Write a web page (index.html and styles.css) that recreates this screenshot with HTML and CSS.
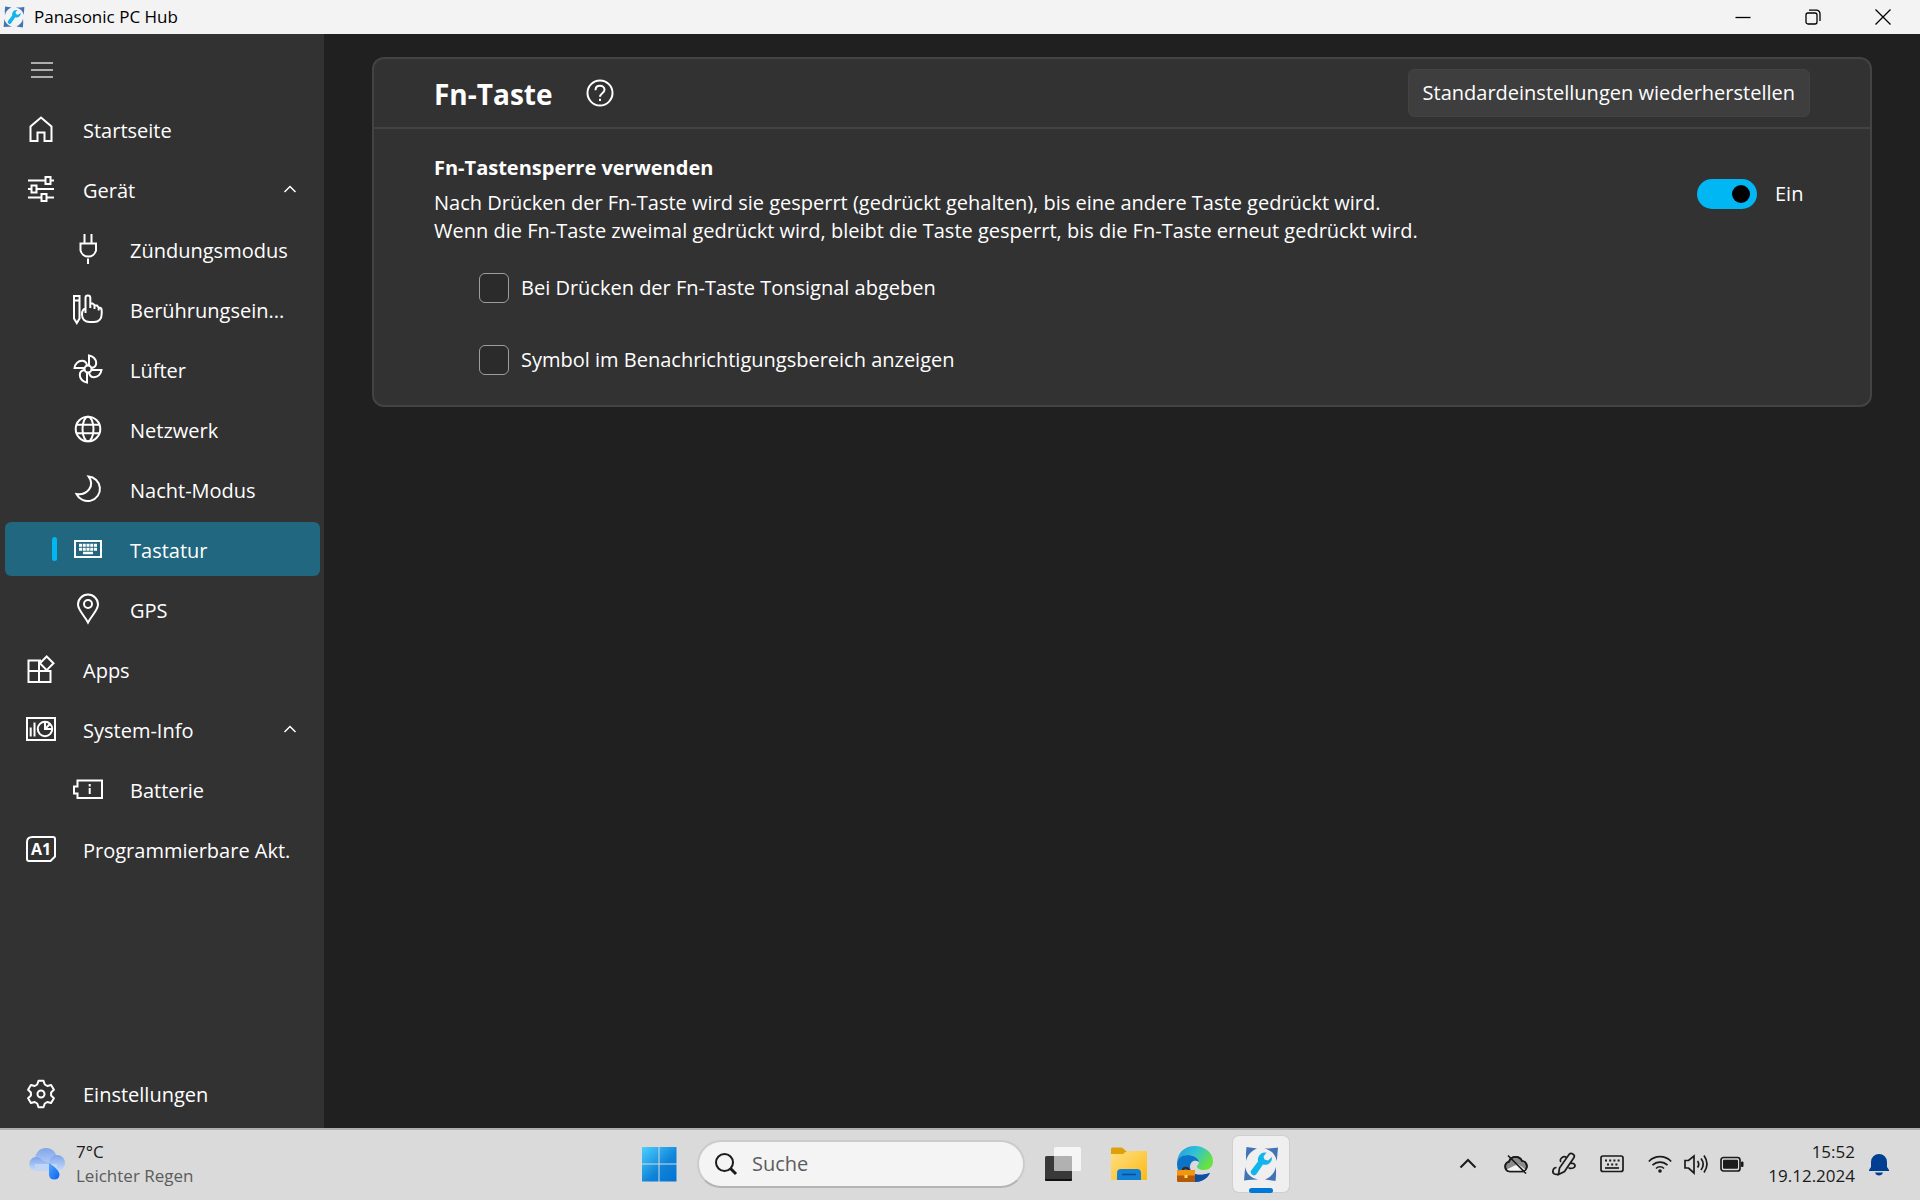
FILE: index.html
```html
<!DOCTYPE html>
<html lang="de">
<head>
    <meta charset="UTF-8">
    <meta name="viewport" content="width=device-width, initial-scale=1.0">
    <title>Panasonic PC Hub</title>
    <link rel="stylesheet" href="styles.css">
</head>
<body>
    <!-- shared symbols -->
    <svg class="symbols" width="0" height="0" aria-hidden="true">
        <symbol id="hubLogo" viewBox="0 0 36 36">
            <g fill="#4173b6">
                <path d="M3.5 1L14 2.5C8 5 4.500 9 3.200 15Q2.500 8 3.500 1z"/>
                <path d="M21 2.500Q28 2.500 35 1.500L33.800 15C32.500 8 28 4 21 2.500z"/>
                <path d="M3.500 1L14 2.500C8 5 4.500 9 3.200 15Q2.500 8 3.500 1z" transform="rotate(180 18 18)"/>
                <path d="M21 2.500Q28 2.500 35 1.500L33.800 15C32.500 8 28 4 21 2.500z" transform="rotate(180 18 18)"/>
            </g>
            <path fill="#12b4ec" d="M23.500 6.500l-3 4 1 3 3.500 1 4-3.500A7 7 0 0 1 20 18.500L13.500 28a3.200 3.200 0 0 1-5-4L15 15.500A7.500 7.500 0 0 1 23.500 6.500z"/>
        </symbol>
        <symbol id="chevronUp" viewBox="0 0 16 16">
            <path d="M2.5 11L8 5.500l5.500 5.500" fill="none" stroke="currentColor" stroke-width="1.5"/>
        </symbol>
    </svg>

    <header class="titlebar">
        <svg class="titlebar-logo"><use href="#hubLogo"/></svg>
        <span class="titlebar-name">Panasonic PC Hub</span>
        <div class="window-buttons">
            <button class="window-button" aria-label="Minimieren">
                <svg viewBox="0 0 16 16"><path d="M.5 8.500h15"/></svg>
            </button>
            <button class="window-button" aria-label="Verkleinern">
                <svg viewBox="0 0 16 16"><rect x="1" y="4" width="11" height="11" rx="2"/><path d="M4 1.200h7.500a3.500 3.500 0 0 1 3.500 3.500V12"/></svg>
            </button>
            <button class="window-button" aria-label="Schließen">
                <svg viewBox="0 0 16 16"><path d="M.5.5l15 15M15.500.5l-15 15"/></svg>
            </button>
        </div>
    </header>

    <div class="window">
        <nav class="sidebar">
            <button class="nav-item" aria-label="Navigation">
                <svg class="icon menu-icon" viewBox="0 0 30 30"><path d="M5 8h22M5 15h22M5 22h22"/></svg>
            </button>
            <a class="nav-item" href="#start">
                <svg class="icon" viewBox="0 0 30 30"><path d="M4.500 26V11.500L15 2.500l10.500 9V26h-7v-8.500h-7V26z"/></svg>
                <span>Startseite</span>
            </a>
            <a class="nav-item" href="#geraet">
                <svg class="icon" viewBox="0 0 30 30"><path d="M2 5.500h17M25 5.500h3M2 14h3M11 14h17M2 22.500h13M21 22.500h7"/><path d="M19.500 2h5v7h-5zM5.500 10.500h5v7h-5zM15.500 19h5v7h-5z"/></svg>
                <span>Gerät</span>
                <svg class="chevron"><use href="#chevronUp"/></svg>
            </a>
            <a class="nav-item sub" href="#zuendung">
                <svg class="icon" viewBox="0 0 30 30"><path d="M11.500-1v9M18.500-1v9M7.500 8.500h15.500v7a8 8 0 0 1-15.500 0zM15 23.500V29"/></svg>
                <span>Zündungsmodus</span>
            </a>
            <a class="nav-item sub" href="#touch">
                <svg class="icon" viewBox="0 0 30 30"><path d="M1 1h5.500v22.500l-2.700 4.500L1 23.500zM1 5.500h5.500"/><path d="M12.500 18V2.800a2.400 2.400 0 0 1 4.800 0V13M17.300 8.500h2.200l2 1.500v4M21.500 10.500h2.500l1.700 2v3M25.700 12.500c2.300 0 3 1.200 3 3.200v3c0 5-3 8.300-7.700 8.300h-4.500C12 27 9 24 9 19.500c0-3 1-5.500 3.500-6"/></svg>
                <span>Berührungsein...</span>
            </a>
            <a class="nav-item sub" href="#luefter">
                <svg class="icon" viewBox="0 0 30 30">
                    <circle cx="15" cy="14" r="3.500"/>
                    <path d="M16 10V.5c4 .5 7.200 3.500 7.200 7.500 0 2.500-2 4.500-4.500 5"/>
                    <path d="M16 10V.5c4 .5 7.200 3.500 7.200 7.500 0 2.500-2 4.500-4.500 5" transform="rotate(90 15 14)"/>
                    <path d="M16 10V.5c4 .5 7.200 3.500 7.200 7.500 0 2.500-2 4.500-4.500 5" transform="rotate(180 15 14)"/>
                    <path d="M16 10V.5c4 .5 7.200 3.500 7.200 7.500 0 2.500-2 4.500-4.500 5" transform="rotate(270 15 14)"/>
                </svg>
                <span>Lüfter</span>
            </a>
            <a class="nav-item sub" href="#netzwerk">
                <svg class="icon" viewBox="0 0 30 30"><circle cx="15" cy="14" r="12.300"/><ellipse cx="15" cy="14" rx="5.500" ry="12.300"/><path d="M3.500 9.700h23M3.500 18.300h23"/></svg>
                <span>Netzwerk</span>
            </a>
            <a class="nav-item sub" href="#nacht">
                <svg class="icon" viewBox="0 0 30 30"><path d="M15.500 1.500a12.300 12.300 0 1 1-12 17.500C14 20.500 22.500 11 15.500 1.500z"/></svg>
                <span>Nacht-Modus</span>
            </a>
            <a class="nav-item sub active" href="#tastatur" aria-current="page">
                <svg class="icon" viewBox="0 0 30 30"><path d="M2 6h26v16H2z"/><path d="M6 10.200h18M6 14.200h18" stroke-width="3" stroke-dasharray="3 .75"/><path d="M10 18h10" stroke-width="2.500"/></svg>
                <span>Tastatur</span>
            </a>
            <a class="nav-item sub" href="#gps">
                <svg class="icon" viewBox="0 0 30 30"><path d="M15 27.500C11 20 5 15 5 9.500a10 10 0 0 1 20 0C25 15 19 20 15 27.500z"/><circle cx="15" cy="9" r="4"/></svg>
                <span>GPS</span>
            </a>
            <a class="nav-item" href="#apps">
                <svg class="icon" viewBox="0 0 30 30"><path d="M15 5.500H2.500V27h22V16H2.500M13 5.500V27M24.500 16v-1"/><path class="knockout" d="M20.700 1.500l6.800 6.800-6.800 6.800-6.800-6.800z"/></svg>
                <span>Apps</span>
            </a>
            <a class="nav-item" href="#system">
                <svg class="icon" viewBox="0 0 30 30"><path d="M1 3h28v22H1zM4.700 12.500v9M8.500 7.500v14"/><circle cx="19" cy="14" r="7.200"/><path d="M19 7v7h7M19 14l5-5"/></svg>
                <span>System-Info</span>
                <svg class="chevron"><use href="#chevronUp"/></svg>
            </a>
            <a class="nav-item sub" href="#batterie">
                <svg class="icon" viewBox="0 0 30 30"><path d="M4.500 5.500H29v17.500H4.500v-4.500H1v-7h3.500z"/><path d="M16.700 9v2.500M16.700 13v6"/></svg>
                <span>Batterie</span>
            </a>
            <a class="nav-item" href="#tasten">
                <svg class="icon" viewBox="0 0 30 30"><path d="M6.500 2H27a2 2 0 0 1 2 2v17.500l-4.500 4.500H3a2 2 0 0 1-2-2V7q0-5 5.500-5z"/><text class="icon-text" x="15" y="20" text-anchor="middle">A1</text></svg>
                <span>Programmierbare Akt.</span>
            </a>
            <a class="nav-item nav-bottom" href="#einstellungen">
                <svg class="icon" viewBox="-15 -15 30 30"><path stroke-linejoin="round" d="M-3.800-9.500L-2.500-13.200h5L3.800-9.500 6.300-8l3.800-1 2.800 4.800L10.100-1.500v3l2.800 2.700L10.100 9 6.300 8 3.800 9.500 2.500 13.200h-5L-3.800 9.500-6.300 8l-3.800 1-2.800-4.800 2.800-2.700v-3l-2.800-2.700L-10.100-9l3.800 1z"/><circle r="3.500"/></svg>
                <span>Einstellungen</span>
            </a>
        </nav>

        <main class="content">
            <section class="card">
                <div class="card-header">
                    <h1>Fn-Taste</h1>
                    <button class="help-button" aria-label="Hilfe">
                        <svg viewBox="0 0 28 28"><circle cx="14" cy="14" r="12.500"/><path d="M9.500 11.200c0-2.700 1.900-4.400 4.500-4.400s4.500 1.700 4.500 4c0 3.200-4.500 3.600-4.500 7"/><path d="M14 19.700v2.300"/></svg>
                    </button>
                    <button class="reset-button">Standardeinstellungen wiederherstellen</button>
                </div>
                <div class="card-body">
                    <div class="setting">
                        <div class="setting-text">
                            <h2 id="lockTitle">Fn-Tastensperre verwenden</h2>
                            <p>Nach Drücken der Fn-Taste wird sie gesperrt (gedrückt gehalten), bis eine andere Taste gedrückt wird.<br>
                            Wenn die Fn-Taste zweimal gedrückt wird, bleibt die Taste gesperrt, bis die Fn-Taste erneut gedrückt wird.</p>
                        </div>
                        <label class="toggle">
                            <input type="checkbox" role="switch" aria-describedby="lockTitle" checked>
                            <span>Ein</span>
                        </label>
                    </div>
                    <div class="options">
                        <label class="option"><input type="checkbox"><span>Bei Drücken der Fn-Taste Tonsignal abgeben</span></label>
                        <label class="option"><input type="checkbox"><span>Symbol im Benachrichtigungsbereich anzeigen</span></label>
                    </div>
                </div>
            </section>
        </main>
    </div>

    <footer class="taskbar">
        <button class="weather">
            <svg viewBox="0 0 36 32">
                <defs>
                    <linearGradient id="cloud" x1="0" y1="0" x2="0" y2="1">
                        <stop offset="0" stop-color="#7fa4ea"/>
                        <stop offset="1" stop-color="#c6dcf8"/>
                    </linearGradient>
                    <linearGradient id="drop" x1="0" y1="0" x2="1" y2="1">
                        <stop offset="0" stop-color="#55a4fb"/>
                        <stop offset="1" stop-color="#0563f4"/>
                    </linearGradient>
                </defs>
                <circle cx="17" cy="11" r="11" fill="url(#cloud)"/>
                <path d="M7 23a7 7 0 1 1 6-11l8 4v7z" fill="url(#cloud)"/>
                <circle cx="28" cy="15" r="8" fill="url(#cloud)"/>
                <path d="M6 16h22v7H6z" fill="#bfd6f7"/>
                <path d="M20 15c6 4 10.500 8 10.500 12a5.300 5.300 0 0 1-10.500 0z" fill="url(#drop)"/>
            </svg>
            <span class="weather-text"><span>7°C</span><span class="forecast">Leichter Regen</span></span>
        </button>

        <div class="task-icons">
            <button class="task-button" aria-label="Start">
                <svg viewBox="0 0 36 36">
                    <defs>
                        <linearGradient id="start" gradientUnits="userSpaceOnUse" x1="0" y1="0" x2="34" y2="36">
                            <stop offset="0" stop-color="#4fd4ff"/>
                            <stop offset=".6" stop-color="#0f84d9"/>
                            <stop offset="1" stop-color="#0473d3"/>
                        </linearGradient>
                    </defs>
                    <path fill="url(#start)" d="M1 1h16.500v16.500H1zM18.500 1h17v16.500h-17zM1 18.500h16.500v17H1zM18.500 18.500h17v17h-17z"/>
                </svg>
            </button>
            <label class="search">
                <svg viewBox="0 0 24 24"><circle cx="10.500" cy="10.500" r="8.500"/><path d="M16.500 16.500l5.500 5.500" stroke-width="3"/></svg>
                <input type="search" placeholder="Suche" aria-label="Suche">
            </label>
            <button class="task-button" aria-label="Taskansicht">
                <svg viewBox="0 0 36 36">
                    <rect x="0" y="10" width="27" height="25" rx="1.500" fill="#393939"/>
                    <path d="M0 33h27v.5a1.500 1.500 0 0 1-1.500 1.500h-24A1.500 1.500 0 0 1 0 33.500z" fill="#111"/>
                    <rect x="9" y="1" width="27" height="24" rx="1.500" fill="#fff" fill-opacity=".72"/>
                    <path d="M9 10h18v15H9z" fill="#999" fill-opacity=".5"/>
                </svg>
            </button>
            <button class="task-button" aria-label="Explorer">
                <svg viewBox="0 0 36 36">
                    <defs>
                        <linearGradient id="folder" x1="0" y1="0" x2="1" y2="1">
                            <stop offset="0" stop-color="#ffe083"/>
                            <stop offset="1" stop-color="#fcb913"/>
                        </linearGradient>
                    </defs>
                    <path d="M0 3a1.500 1.500 0 0 1 1.500-1.500h9.500L15 5h19.500A1.500 1.500 0 0 1 36 6.500V12H0z" fill="#e0a008"/>
                    <path d="M0 8h12l4-3h20v27.500a1.500 1.500 0 0 1-1.500 1.500h-33A1.500 1.500 0 0 1 0 32.500z" fill="url(#folder)"/>
                    <path d="M6 34V27a4 4 0 0 1 4-4h16a4 4 0 0 1 4 4v7z" fill="#1280d4"/>
                    <path d="M11 28.500h14" stroke="#0a4f8f" stroke-width="1.5"/>
                </svg>
            </button>
            <button class="task-button" aria-label="Edge">
                <svg viewBox="0 0 36 36">
                    <defs>
                        <linearGradient id="edgeTop" x1="0" y1="0" x2="1" y2=".5">
                            <stop offset="0" stop-color="#2497dc"/>
                            <stop offset=".5" stop-color="#2fc1d8"/>
                            <stop offset="1" stop-color="#69e23f"/>
                        </linearGradient>
                    </defs>
                    <path d="M0 16C1 6 8 0 18 0s18 7 18 15c0 6-4 9-9 9s-7-2-7-3.500 2-2 2-4.500c0-3-3.500-7-10-7S1 12 0 16z" fill="url(#edgeTop)"/>
                    <path d="M0 18C0 12 5 9 11 9c7 0 11 4 11 7-5-3-9 0-9 5 0 7 8 10 20 6-3 6-9 9-15 9C8 36 0 28 0 18z" fill="#0c74c8"/>
                    <path d="M13 21c0 7 8 10 20 6-3 6-9 9-15 9-3-4-5-9-5-15z" fill="#0f4f9e"/>
                    <path d="M6 24c0-3 5-3 6 0" fill="none" stroke="#4a2508" stroke-width="2"/>
                    <rect x="0" y="24" width="18" height="12" rx="1" fill="#b35a08"/>
                    <path d="M0 25a1 1 0 0 1 1-1h16a1 1 0 0 1 1 1v4.500H0z" fill="#f39412"/>
                    <rect x="7.500" y="29" width="3" height="3" fill="#ffdf4d"/>
                </svg>
            </button>
            <button class="task-button open" aria-label="Panasonic PC Hub">
                <svg><use href="#hubLogo"/></svg>
            </button>
        </div>

        <div class="tray">
            <button class="tray-button" aria-label="Ausgeblendete Symbole">
                <svg viewBox="0 0 24 24"><path d="M4.500 15.500l7.500-7.500 7.500 7.500" stroke-width="2"/></svg>
            </button>
            <button class="tray-button" aria-label="OneDrive">
                <svg viewBox="0 0 24 24"><path d="M5.500 19.500a5 5 0 0 1-.5-9.800A7 7 0 0 1 18 9a5.300 5.300 0 0 1 .5 10.500z" fill="#8c8c8c"/><path d="M2.500 17.500L14 12l8 6-3 1.500H5z" fill="#f4f4f4" stroke="none"/><path d="M5.500 19.500a5 5 0 0 1-.5-9.800A7 7 0 0 1 18 9a5.300 5.300 0 0 1 .5 10.500zM4 3.500L22 21.500"/></svg>
            </button>
            <button class="tray-button" aria-label="Stiftmenü">
                <svg viewBox="0 0 24 24"><path d="M6.500 22.500l1-6.500L17 2.500c2-2.500 6.500 0 5 3L12.500 19.500zM14.500 5.500c-3-2.500-8 2-5.500 4.500M19 11.500c4-1 5.500 3 2 4.500-2 .8-4 0-4.500 0M4.500 15.500c-3.500 0-5 5-2 6.500 1.500.5 3 .5 4 .5"/></svg>
            </button>
            <button class="tray-button" aria-label="Bildschirmtastatur">
                <svg viewBox="0 0 24 24"><rect x="1" y="4" width="22" height="15.500" rx="2"/><path d="M5 8.500h15M7 12.500h11" stroke-width="2" stroke-dasharray="2 2.200"/><path d="M5 16h14"/></svg>
            </button>
            <button class="tray-button" aria-label="WLAN, Lautsprecher, Akku">
                <svg viewBox="0 0 24 24"><path d="M.8 9.500a15.500 15.500 0 0 1 22.400 0M4.500 13.200a10.500 10.500 0 0 1 15 0M8 16.500a5.500 5.500 0 0 1 8 0"/><circle cx="12" cy="19" r="1.800" fill="currentColor" stroke="none"/></svg>
                <svg viewBox="0 0 24 24"><path d="M1 8.500h3.500L10 4v17l-5.500-5H1zM13.500 9q2.500 3.300 0 6.500M17 6.500q4.500 5.800 0 11.500M20 3.500q6 8.500 0 17"/></svg>
                <svg viewBox="0 0 24 24"><rect x="1" y="5.500" width="19" height="13.500" rx="2.500"/><rect x="3" y="7.800" width="15" height="9" rx="1" fill="currentColor" stroke="none"/><path d="M21.500 10h1.500v4.500h-1.500z" fill="currentColor" stroke-width="1"/></svg>
            </button>
            <button class="clock"><time>15:52</time><time>19.12.2024</time></button>
            <button class="tray-button bell" aria-label="Benachrichtigungen">
                <svg viewBox="0 0 20 24"><path d="M2 10a8 8 0 0 1 16 0v5l2 3v1H0v-1l2-3zM6 20.500h8a4.200 4.200 0 0 1-8 0z"/></svg>
            </button>
        </div>
    </footer>
</body>
</html>
```

FILE: styles.css
```css
* {
    box-sizing: border-box;
}

body {
    margin: 0;
    min-height: 100vh;
    display: flex;
    flex-direction: column;
    background-color: #202020;
    color: white;
    font-family: "Open Sans", "Noto Sans", sans-serif;
    font-size: 20px;
    line-height: 28px;
}

button,
input {
    font: inherit;
    color: inherit;
}

button {
    background: none;
    border: none;
    padding: 0;
    cursor: pointer;
}

svg {
    display: block;
    flex-shrink: 0;
    overflow: visible;
}

.symbols {
    position: absolute;
}

/* Title bar */

.titlebar {
    display: flex;
    align-items: center;
    height: 34px;
    padding-left: 3px;
    background-color: #f3f3f3;
    color: black;
    font-size: 17px;
}

.titlebar-logo {
    width: 22px;
    height: 22px;
}

.titlebar-name {
    margin-left: 9px;
}

.window-buttons {
    display: flex;
    margin-left: auto;
    padding-right: 2px;
}

.window-button {
    display: flex;
    align-items: center;
    justify-content: center;
    width: 70px;
    height: 34px;
}

.window-button svg {
    width: 16px;
    height: 16px;
    fill: none;
    stroke: black;
    stroke-width: 1.3;
}

.window {
    display: flex;
    flex: 1;
}

/* Sidebar */

.sidebar {
    display: flex;
    flex-direction: column;
    gap: 6px;
    width: 324px;
    flex-shrink: 0;
    padding: 8px 4px 8px 5px;
    background-color: #323232;
}

.nav-item {
    position: relative;
    display: flex;
    align-items: center;
    height: 54px;
    padding: 0 22px 0 21px;
    border-radius: 6px;
    color: white;
    text-decoration: none;
    white-space: nowrap;
}

.nav-item.sub {
    padding-left: 68px;
}

.nav-item span {
    margin-left: 27px;
    padding-top: 4px;
}

.nav-item:hover {
    background-color: #3d3d3d;
}

.nav-item.active {
    background-color: #20677f;
}

.nav-item.active::before {
    content: "";
    position: absolute;
    left: 47px;
    top: 15px;
    width: 5px;
    height: 24px;
    border-radius: 3px;
    background-color: #00b7f4;
}

.nav-bottom {
    margin-top: auto;
}

.icon {
    width: 30px;
    height: 30px;
    margin-top: 2px;
    fill: none;
    stroke: white;
    stroke-width: 2;
}

.menu-icon {
    stroke: #d8d8d8;
    stroke-width: 1.5;
}

.knockout {
    fill: #323232;
}

.icon-text {
    fill: white;
    stroke: none;
    font-size: 16px;
    font-weight: 700;
}

.chevron {
    width: 16px;
    height: 16px;
    margin-left: auto;
}

/* Content */

.content {
    flex: 1;
    padding: 23px 48px;
}

.card {
    border: 2px solid #434343;
    border-radius: 12px;
    background-color: #323232;
}

.card-header {
    display: flex;
    align-items: center;
    height: 70px;
    padding: 0 60px;
    border-bottom: 2px solid #434343;
}

h1 {
    margin: 0;
    padding-top: 2px;
    font-size: 28px;
    line-height: 36px;
}

.help-button {
    margin-left: 33px;
}

.help-button svg {
    width: 28px;
    height: 28px;
    fill: none;
    stroke: white;
    stroke-width: 2;
}

.reset-button {
    height: 48px;
    margin-left: auto;
    padding: 0 14px;
    border: 1px solid #434343;
    border-radius: 6px;
    background-color: #3e3e3e;
}

.card-body {
    padding: 25px 60px 30px;
}

.setting {
    display: flex;
    align-items: center;
    justify-content: space-between;
}

h2 {
    margin: 0 0 7px;
    font-size: 20px;
    line-height: 28px;
}

p {
    margin: 0;
}

.toggle {
    display: flex;
    align-items: center;
    gap: 18px;
    width: 113px;
    margin-bottom: 12px;
}

.toggle input {
    appearance: none;
    display: flex;
    align-items: center;
    justify-content: flex-end;
    width: 60px;
    height: 30px;
    margin: 0;
    padding: 0 7px;
    border-radius: 15px;
    background-color: #00b7f4;
}

.toggle input::before {
    content: "";
    width: 18px;
    height: 18px;
    border-radius: 50%;
    background-color: black;
}

.toggle input:not(:checked) {
    justify-content: flex-start;
    background-color: #8a8a8a;
}

.options {
    display: flex;
    flex-direction: column;
    gap: 42px;
    margin-top: 28px;
    padding-left: 45px;
}

.option {
    display: flex;
    align-items: center;
    gap: 12px;
    height: 30px;
}

.option input {
    appearance: none;
    width: 30px;
    height: 30px;
    margin: 0;
    border: 1px solid #9c9c9c;
    border-radius: 6px;
    background-color: #2b2b2b;
}

.option input:checked {
    background-color: #00b7f4;
}

/* Taskbar */

.taskbar {
    display: grid;
    grid-template-columns: 1fr auto 1fr;
    align-items: center;
    height: 72px;
    padding-bottom: 2px;
    border-top: 2px solid #b0b0b0;
    background-color: #dadada;
    color: #1b1b1b;
}

.weather {
    display: flex;
    align-items: center;
    justify-self: start;
    gap: 11px;
    margin-left: 29px;
    text-align: left;
    font-size: 17px;
    line-height: 24px;
}

.weather svg {
    width: 36px;
    height: 32px;
}

.weather-text,
.clock {
    display: flex;
    flex-direction: column;
}

.forecast {
    color: #5c5c5c;
}

.task-icons {
    display: flex;
    align-items: center;
    gap: 10px;
}

.task-button {
    position: relative;
    display: flex;
    align-items: center;
    justify-content: center;
    width: 56px;
    height: 56px;
    border-radius: 6px;
}

.task-button svg {
    width: 36px;
    height: 36px;
}

.task-button.open {
    background-color: #efefef;
    box-shadow: 0 0 0 1px #cfcfcf;
}

.task-button.open::after {
    content: "";
    position: absolute;
    left: 16px;
    bottom: -1px;
    width: 24px;
    height: 5px;
    border-radius: 3px;
    background-color: #0078d7;
}

.search {
    display: flex;
    align-items: center;
    gap: 14px;
    width: 328px;
    height: 48px;
    padding: 0 15px;
    border: 2px solid #cbcbcb;
    border-bottom-color: #b4b4b4;
    border-radius: 24px;
    background-color: #f4f4f4;
}

.search svg {
    width: 24px;
    height: 24px;
    fill: none;
    stroke: #1b1b1b;
    stroke-width: 2;
}

.search input {
    flex: 1;
    min-width: 0;
    padding: 0;
    border: none;
    outline: none;
    background: none;
}

.search input::placeholder {
    color: #5c5c5c;
    opacity: 1;
}

.tray {
    display: flex;
    align-items: center;
    justify-self: end;
    gap: 24px;
    padding-right: 31px;
}

.tray-button {
    display: flex;
    gap: 12px;
}

.tray-button svg {
    width: 24px;
    height: 24px;
    fill: none;
    stroke: currentColor;
    stroke-width: 1.7;
}

.clock {
    align-items: flex-end;
    font-size: 17px;
    line-height: 24px;
}

.bell {
    margin-left: -10px;
}

.tray .bell svg {
    width: 20px;
    fill: #003e92;
    stroke: none;
}
```
